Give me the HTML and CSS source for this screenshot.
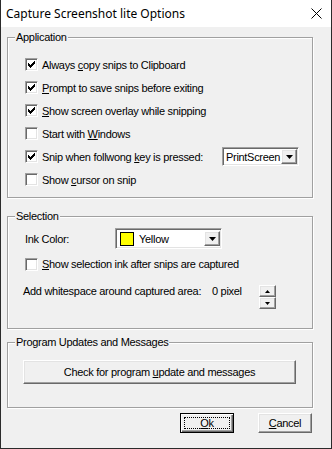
FILE: index.html
```html
<!DOCTYPE html>
<html>
<head>
<meta charset="utf-8">
<link rel="stylesheet" href="styles.css">
</head>
<body>
<div class="window">
  <div class="titlebar">
    <span class="title">Capture Screenshot lite Options</span>
    <svg class="close" width="11" height="11" viewBox="0 0 11 11"><path d="M0.5 0.5L10.5 10.5M10.5 0.5L0.5 10.5" stroke="#000" stroke-width="1" fill="none"/></svg>
  </div>
  <div class="client">
    <div class="group app">
      <span class="legend">Application</span>
      <div class="row"><span class="cb"><svg width="7" height="7" viewBox="0 0 7 7" shape-rendering="crispEdges"><path d="M0 2h1v3H0zM1 3h1v3H1zM2 4h1v3H2zM3 3h1v3H3zM4 2h1v3H4zM5 1h1v3H5zM6 0h1v3H6z" fill="#000"/></svg></span><span>Always <u>c</u>opy snips to Clipboard</span></div>
      <div class="row"><span class="cb"><svg width="7" height="7" viewBox="0 0 7 7" shape-rendering="crispEdges"><path d="M0 2h1v3H0zM1 3h1v3H1zM2 4h1v3H2zM3 3h1v3H3zM4 2h1v3H4zM5 1h1v3H5zM6 0h1v3H6z" fill="#000"/></svg></span><span><u>P</u>rompt to save snips before exiting</span></div>
      <div class="row"><span class="cb"><svg width="7" height="7" viewBox="0 0 7 7" shape-rendering="crispEdges"><path d="M0 2h1v3H0zM1 3h1v3H1zM2 4h1v3H2zM3 3h1v3H3zM4 2h1v3H4zM5 1h1v3H5zM6 0h1v3H6z" fill="#000"/></svg></span><span><u>S</u>how screen overlay while snipping</span></div>
      <div class="row"><span class="cb"></span><span>Start with <u>W</u>indows</span></div>
      <div class="row split">
        <span class="chk"><span class="cb"><svg width="7" height="7" viewBox="0 0 7 7" shape-rendering="crispEdges"><path d="M0 2h1v3H0zM1 3h1v3H1zM2 4h1v3H2zM3 3h1v3H3zM4 2h1v3H4zM5 1h1v3H5zM6 0h1v3H6z" fill="#000"/></svg></span><span>Snip when follwong <u>k</u>ey is pressed:</span></span>
        <span class="combo key"><span class="val">PrintScreen</span><span class="btn arrow"><svg width="7" height="4" viewBox="0 0 7 4"><path d="M0 0h7L3.5 4z" fill="#000"/></svg></span></span>
      </div>
      <div class="row"><span class="cb"></span><span>Show <u>c</u>ursor on snip</span></div>
    </div>

    <div class="group sel">
      <span class="legend">Selection</span>
      <div class="inkrow">
        <span class="inklabel">Ink Color:</span>
        <span class="combo ink"><span class="swatch"></span><span class="val">Yellow</span><span class="btn arrow"><svg width="7" height="4" viewBox="0 0 7 4"><path d="M0 0h7L3.5 4z" fill="#000"/></svg></span></span>
      </div>
      <div class="row selchk"><span class="cb"></span><span><u>S</u>how selection ink after snips are captured</span></div>
      <div class="wsrow">
        <span class="wslabel">Add whitespace around captured area:</span>
        <span class="wsval">0 pixel</span>
        <span class="spin">
          <span class="btn spinbtn"><svg width="5" height="3" viewBox="0 0 5 3"><path d="M2.5 0L5 3H0z" fill="#000"/></svg></span>
          <span class="btn spinbtn"><svg width="5" height="3" viewBox="0 0 5 3"><path d="M0 0h5L2.5 3z" fill="#000"/></svg></span>
        </span>
      </div>
    </div>

    <div class="group prog">
      <span class="legend">Program Updates and Messages</span>
      <span class="btn push wide"><span>Check for program <u>u</u>pdate and messages</span></span>
    </div>

    <div class="actions">
      <span class="btn push dlg default"><span class="focus"><span><u>O</u>k</span></span></span>
      <span class="btn push dlg"><span><u>C</u>ancel</span></span>
    </div>
  </div>
</div>
</body>
</html>
```
FILE: styles.css
```css
* { box-sizing: border-box; }
html, body { margin: 0; padding: 0; }
body {
  width: 332px;
  height: 449px;
  overflow: hidden;
  background: #ffffff;
  font-family: "Liberation Sans", Arial, sans-serif;
  font-size: 11px;
  letter-spacing: -0.3px;
  color: #000;
}
u { text-decoration: underline; text-underline-offset: 1px; }

.window {
  width: 332px;
  height: 449px;
  background: #f0f0f0;
  border: 1px solid #2b2b2b;
  border-top: 0;
  display: flex;
  flex-direction: column;
}

.titlebar {
  height: 27px;
  flex: none;
  background: #ffffff;
  display: flex;
  align-items: center;
  justify-content: space-between;
  padding: 0 9px 0 5px;
}
.title {
  font-family: "Noto Sans", "Open Sans", sans-serif;
  font-size: 12px;
  letter-spacing: 0;
}
.close { display: block; }

.client {
  padding: 10px 0 0 6px;
  display: flex;
  flex-direction: column;
  align-items: flex-start;
}

.group {
  position: relative;
  width: 306px;
  border: 1px solid #a0a0a0;
  box-shadow: inset 1px 1px 0 #ffffff, 1px 1px 0 #ffffff;
  display: flex;
  flex-direction: column;
}
.legend {
  position: absolute;
  left: 7px;
  top: -7px;
  line-height: 13px;
  padding: 0 1px;
  background: #f0f0f0;
}

.app { padding: 15px 13px 6px 17px; }
.row {
  height: 23px;
  display: flex;
  align-items: center;
  white-space: nowrap;
}
.row.split { justify-content: space-between; }
.chk { display: flex; align-items: center; }

.cb {
  width: 13px;
  height: 13px;
  flex: none;
  margin-right: 4px;
  background: #ffffff;
  border: 1px solid;
  border-color: #a0a0a0 #ffffff #ffffff #a0a0a0;
  box-shadow: inset 1px 1px 0 #696969, inset -1px -1px 0 #e3e3e3;
  display: flex;
  align-items: center;
  justify-content: center;
}
.cb svg { display: block; }

.btn {
  background: #f0f0f0;
  border: 1px solid;
  border-color: #ffffff #696969 #696969 #ffffff;
  box-shadow: inset -1px -1px 0 #a0a0a0, inset 1px 1px 0 #e3e3e3;
  display: flex;
  align-items: center;
  justify-content: center;
  white-space: nowrap;
}
.btn svg { display: block; }

.combo {
  display: flex;
  align-items: stretch;
  background: #ffffff;
  border: 1px solid;
  border-color: #a0a0a0 #ffffff #ffffff #a0a0a0;
  box-shadow: inset 1px 1px 0 #696969, inset -1px -1px 0 #e3e3e3;
}
.combo .val { flex: 1; display: flex; align-items: center; }
.combo .arrow { width: 16px; flex: none; }

.key { width: 77px; height: 19px; padding: 1px; }
.key .val { padding-left: 2px; }

.sel { padding: 11px 0 19px 17px; margin-top: 18px; }
.inkrow { height: 21px; display: flex; align-items: center; }
.inklabel { width: 90px; }
.ink { width: 107px; height: 21px; padding: 2px 1px 2px 2px; align-items: center; }
.ink .arrow { align-self: stretch; }
.swatch {
  width: 14px;
  height: 14px;
  margin: 0 5px 0 2px;
  background: #ffff00;
  border: 1px solid #000;
  flex: none;
}
.row.selchk { height: 16px; margin-top: 7px; }

.wsrow {
  height: 24px;
  margin-top: 13px;
  display: flex;
  align-items: flex-start;
  white-space: nowrap;
}
.wslabel { width: 189px; margin-left: -2px; line-height: 13px; }
.wsval { width: 47px; line-height: 13px; }
.spin { display: flex; flex-direction: column; }
.spinbtn { width: 17px; height: 12px; }

.prog { padding: 17px 0 23px 15px; margin-top: 13px; }
.push { height: 24px; }
.wide { width: 273px; }

.actions {
  display: flex;
  gap: 24px;
  margin-top: 5px;
  padding-left: 173px;
}
.dlg { width: 54px; height: 20px; }
.default {
  border: 1px solid #000;
  box-shadow: inset 1px 1px 0 #ffffff, inset -1px -1px 0 #696969, inset -2px -2px 0 #a0a0a0;
  padding: 3px;
}
.focus {
  flex: 1;
  align-self: stretch;
  border: 1px dotted #000;
  display: flex;
  align-items: center;
  justify-content: center;
}
```
